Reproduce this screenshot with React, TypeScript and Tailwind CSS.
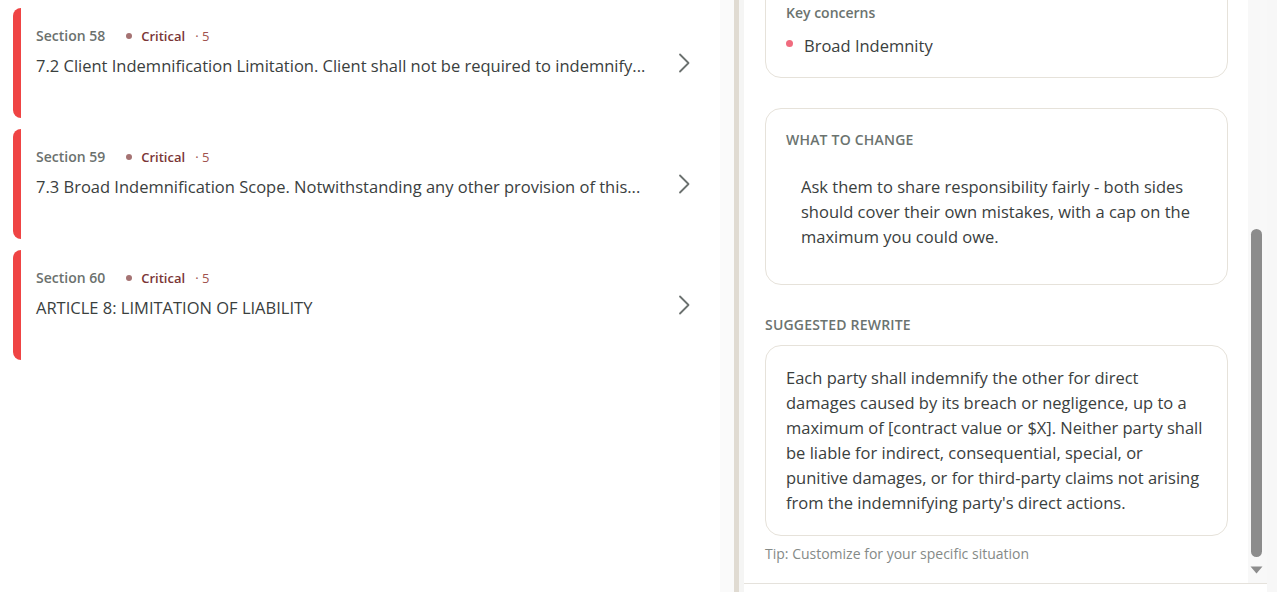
import React from "react";

const items = [
  { section: "Section 58", title: "7.2 Client Indemnification Limitation. Client shall not be required to indemnify..." },
  { section: "Section 59", title: "7.3 Broad Indemnification Scope. Notwithstanding any other provision of this..." },
  { section: "Section 60", title: "ARTICLE 8: LIMITATION OF LIABILITY" },
];

function Chevron() {
  return (
    <svg width="24" height="24" viewBox="0 0 24 24" fill="none" className="shrink-0">
      <path d="M8 3.5 L16.5 12 L8 20.5" stroke="#6b716f" strokeWidth="1.8" strokeLinecap="round" strokeLinejoin="round" />
    </svg>
  );
}

export default function App() {
  return (
    <div className="flex h-[592px] w-[1277px] overflow-hidden bg-[#f7f7f7] font-['Open_Sans',sans-serif]">
      {/* Left pane */}
      <div className="flex w-[734px] shrink-0">
        <div className="flex w-[720px] flex-col gap-[11px] bg-white pl-[13px] pr-[13px] pt-[8px]">
          {items.map((it) => (
            <div
              key={it.section}
              className="flex h-[110px] items-start rounded-lg border-l-[8px] border-[#ef4444] bg-white pl-[15px] pr-[10px] pt-[18px]"
            >
              <div className="flex min-w-0 flex-1 flex-col gap-[8px]">
                <div className="flex items-center text-[14px] leading-[20px]">
                  <span className="font-semibold text-[#6b716e]">{it.section}</span>
                  <span className="ml-[21px] mr-[9px] h-[6px] w-[6px] rounded-full bg-[#a57373]" />
                  <span className="text-[13px] font-semibold text-[#7a3636]">Critical</span>
                  <span className="ml-[10px] text-[13px] text-[#a0524f]">· 5</span>
                </div>
                <div className="whitespace-nowrap text-[16.5px] leading-[24px] text-[#3a403e]">{it.title}</div>
              </div>
              <div className="mr-[1px] mt-[25px]">
                <Chevron />
              </div>
            </div>
          ))}
        </div>
        <div className="w-[14px] bg-[#fafafa]" />
      </div>

      {/* Divider */}
      <div className="w-[5px] shrink-0 bg-[#e0dbd2]" />
      <div className="w-[5px] shrink-0 bg-[#f5f5f4]" />

      {/* Right pane */}
      <div className="flex w-[523px] shrink-0 flex-col bg-white">
        <div className="flex min-h-0 flex-1">
          <div className="min-w-0 flex-1 overflow-hidden pl-[21px] pr-[20px]">
            {/* Key concerns card */}
            <div className="mt-[-18px] rounded-2xl border border-[#e6e2da] px-[20px] pb-[19px] pt-[20px]">
              <div className="text-[14px] font-semibold leading-[20px] text-[#6b736f]">Key concerns</div>
              <div className="mt-[10px] flex items-start">
                <span className="mt-[7px] h-[7px] w-[7px] shrink-0 rounded-full bg-[#f06b7e]" />
                <span className="ml-[11px] text-[16.5px] leading-[25px] text-[#3a403e]">Broad Indemnity</span>
              </div>
            </div>

            {/* What to change */}
            <div className="mt-[30px] rounded-2xl border border-[#e6e2da] px-[20px] pb-[35px] pt-[21px]">
              <div className="text-[14px] font-semibold uppercase leading-[20px] tracking-[0.2px] text-[#6b736f]">What to change</div>
              <p className="mt-[24px] pl-[15px] pr-[10px] text-[16.5px] leading-[25px] text-[#3a403e]">
                Ask them to share responsibility fairly - both sides should cover their own mistakes, with a cap on the maximum you could owe.
              </p>
            </div>

            {/* Suggested rewrite */}
            <div className="mt-[30px] text-[14px] font-semibold uppercase leading-[20px] tracking-[0.2px] text-[#6b736f]">Suggested rewrite</div>
            <div className="mt-[10px] rounded-2xl border border-[#e6e2da] px-[20px] pb-[20px] pt-[19px]">
              <p className="text-[16.5px] leading-[25px] text-[#3a403e]">
                Each party shall indemnify the other for direct damages caused by its breach or negligence, up to a maximum of [contract value or $X]. Neither party shall be liable for indirect, consequential, special, or punitive damages, or for third-party claims not arising from the indemnifying party's direct actions.
              </p>
            </div>
            <div className="mt-[8px] text-[14px] leading-[20px] text-[#858a87]">Tip: Customize for your specific situation</div>
          </div>

          {/* Scrollbar */}
          <div className="relative w-[19px] shrink-0 bg-[#f8f8f8]">
            <div className="absolute left-[3px] top-[229px] h-[328px] w-[11px] rounded-full bg-[#8c8c8c]" />
            <svg className="absolute left-[2px] top-[566px]" width="13" height="8" viewBox="0 0 13 8">
              <path d="M0.5 0.5 L12.5 0.5 L6.5 7.5 Z" fill="#8c8c8c" />
            </svg>
          </div>
        </div>
        <div className="h-px bg-[#e5e2dc]" />
        <div className="h-[8px] bg-white" />
      </div>

      <div className="flex-1 bg-[#f7f7f7]" />
    </div>
  );
}
